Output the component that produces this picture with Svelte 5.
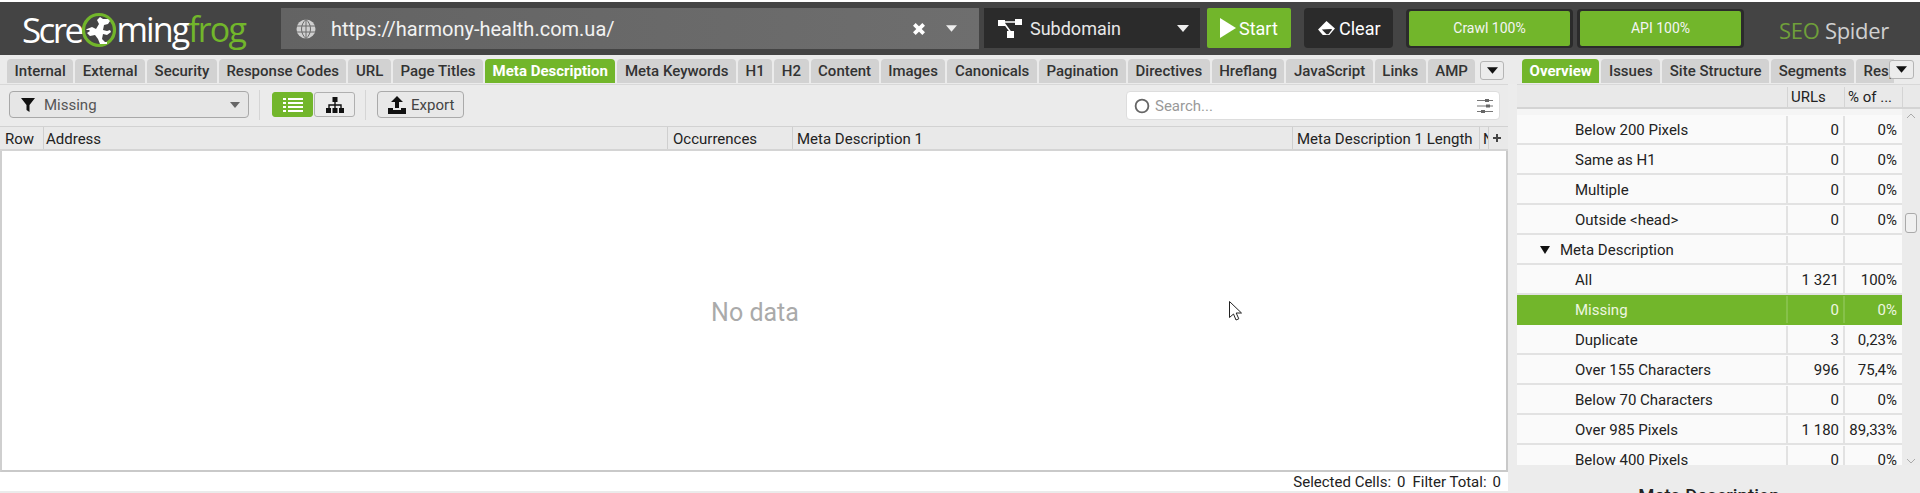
<script>
  const tabs = ['Internal','External','Security','Response Codes','URL','Page Titles','Meta Description','Meta Keywords','H1','H2','Content','Images','Canonicals','Pagination','Directives','Hreflang','JavaScript','Links','AMP'];
  const sideTabs = ['Overview','Issues','Site Structure','Segments','Response Times'];
  const rows = [
    {label:'Below 200 Pixels',urls:'0',pct:'0%'},
    {label:'Same as H1',urls:'0',pct:'0%'},
    {label:'Multiple',urls:'0',pct:'0%'},
    {label:'Outside <head>',urls:'0',pct:'0%'},
    {label:'Meta Description',urls:'',pct:'',group:true},
    {label:'All',urls:'1 321',pct:'100%'},
    {label:'Missing',urls:'0',pct:'0%',active:true},
    {label:'Duplicate',urls:'3',pct:'0,23%'},
    {label:'Over 155 Characters',urls:'996',pct:'75,4%'},
    {label:'Below 70 Characters',urls:'0',pct:'0%'},
    {label:'Over 985 Pixels',urls:'1 180',pct:'89,33%'},
    {label:'Below 400 Pixels',urls:'0',pct:'0%'}
  ];
</script>

<div class="app">
  <header class="header">
    <div class="logo">
      <span>Scre</span>
      <svg class="frog" viewBox="0 0 36 36" width="36" height="36">
        <circle cx="18" cy="18" r="15.5" fill="none" stroke="#72b62b" stroke-width="3.2"/>
        <path d="M6 17l5-2 4 2 3-5-2-4 3-3 3 2 5 0 2 2-2 3-4 1-1 5 4 1 3-1 1 2-4 3-4-1-1 5 3 3 2 0 0 2-7 0-2-5-3-4-5 1-3-3 3-2-1-1-3 0z" fill="#fff"/>
      </svg>
      <span class="logo-end">ming<span class="logo-green">frog</span></span>
    </div>

    <div class="url">
      <svg class="globe" viewBox="0 0 20 20" width="20" height="20">
        <circle cx="10" cy="10" r="9.5" fill="#cfcfcf"/>
        <path d="M0.5 7h19M0.5 13h19M10 0.5v19M10 0.5c-6 5-6 14 0 19M10 0.5c6 5 6 14 0 19" stroke="#6a6a6a" stroke-width="1" fill="none"/>
      </svg>
      <span class="url-text">https://harmony-health.com.ua/</span>
      <svg class="url-x" viewBox="0 0 12 12" width="14" height="14"><path d="M2 2l8 8M10 2l-8 8" stroke="#fff" stroke-width="3.2"/></svg>
      <svg class="url-caret" viewBox="0 0 10 6" width="11" height="7"><path d="M0 0h10L5 6z" fill="#eee"/></svg>
    </div>

    <div class="mode">
      <svg viewBox="0 0 24 20" width="24" height="20">
        <path d="M3 4h17M6 5l8 11" stroke="#fff" stroke-width="1.6" fill="none"/>
        <rect x="0" y="2" width="7" height="6" fill="#fff"/><rect x="17" y="1" width="7" height="6" fill="#fff"/><rect x="9" y="13" width="7" height="7" fill="#fff"/>
      </svg>
      <span class="mode-text">Subdomain</span>
      <svg class="mode-caret" viewBox="0 0 12 7" width="12" height="7"><path d="M0 0h12L6 7z" fill="#eee"/></svg>
    </div>

    <button class="start">
      <svg viewBox="0 0 16 20" width="16" height="20"><path d="M0 0l16 10L0 20z" fill="#fff"/></svg>
      <span>Start</span>
    </button>

    <button class="clear">
      <svg viewBox="0 0 20 16" width="19" height="15"><path d="M10 0l9 8-6 7H6L1 9z" fill="#fff"/><path d="M5 9l5 5h2l4-5-1-0.5z" fill="#2b2b2b"/></svg>
      <span>Clear</span>
    </button>

    <div class="progress crawl"><div class="bar">Crawl 100%</div></div>
    <div class="progress api"><div class="bar">API 100%</div></div>

    <div class="brand"><span class="seo">SEO</span> Spider</div>
  </header>

  <div class="main">
    <section class="left">
      <div class="tabbar">
        {#each tabs as t}
          <div class="tab" class:on={t === 'Meta Description'}>{t}</div>
        {/each}
        <button class="more"><svg viewBox="0 0 10 6" width="11" height="7"><path d="M0 0h10L5 6z" fill="#111"/></svg></button>
      </div>

      <div class="toolbar">
        <div class="filter">
          <svg viewBox="0 0 14 14" width="14" height="14"><path d="M0 0h14L8.5 7v7l-3-2V7z" fill="#111"/></svg>
          <span>Missing</span>
          <svg class="filter-caret" viewBox="0 0 10 6" width="10" height="6"><path d="M0 0h10L5 6z" fill="#666"/></svg>
        </div>
        <div class="sep"></div>
        <div class="views">
          <button class="view on">
            <svg viewBox="0 0 20 14" width="20" height="14"><path d="M0 1h3M5 1h15M0 5h3M5 5h15M0 9h3M5 9h15M0 13h3M5 13h15" stroke="#fff" stroke-width="2"/></svg>
          </button>
          <button class="view">
            <svg viewBox="0 0 18 16" width="18" height="16"><path d="M9 4v4M3 11V8h12v3M9 8v3" stroke="#111" stroke-width="1.4" fill="none"/><rect x="6.5" y="0" width="5" height="5" fill="#111"/><rect x="0" y="11" width="5" height="5" fill="#111"/><rect x="6.5" y="11" width="5" height="5" fill="#111"/><rect x="13" y="11" width="5" height="5" fill="#111"/></svg>
          </button>
        </div>
        <div class="sep sep2"></div>
        <button class="export">
          <svg viewBox="0 0 18 18" width="18" height="18"><path d="M9 0l6 6h-4v6H7V6H3z" fill="#111"/><path d="M0 12h5v2h8v-2h5v6H0z" fill="#111"/></svg>
          <span>Export</span>
        </button>
        <div class="search">
          <svg viewBox="0 0 14 14" width="16" height="16"><circle cx="7" cy="7" r="5.6" fill="none" stroke="#666" stroke-width="1.6"/></svg>
          <span>Search...</span>
          <svg class="sliders" viewBox="0 0 16 16" width="16" height="16"><path d="M0 2.5h16M0 8h16M0 13.5h16" stroke="#777" stroke-width="1"/><rect x="8" y="1" width="4" height="3" fill="#666"/><rect x="9" y="6.5" width="4" height="3" fill="#666"/><rect x="4" y="12" width="4" height="3" fill="#666"/></svg>
        </div>
      </div>

      <div class="thead">
        <div class="th c-row">Row</div>
        <div class="th c-addr">Address</div>
        <div class="th c-occ">Occurrences</div>
        <div class="th c-md">Meta Description 1</div>
        <div class="th c-len">Meta Description 1 Length</div>
        <div class="th c-n">N</div>
        <div class="th c-plus">
          <svg viewBox="0 0 8 8" width="8" height="8"><path d="M4 0v8M0 4h8" stroke="#444" stroke-width="2"/></svg>
        </div>
      </div>

      <div class="tbody">
        <span class="nodata">No data</span>
        <svg class="cursor" viewBox="0 0 13 20" width="13" height="20"><path d="M0.5 0.5v16l4-3.5 2.5 6 2.8-1.2-2.6-5.8h5.3z" fill="#fff" stroke="#222" stroke-width="1"/></svg>
      </div>

      <div class="status">
        <span>Selected Cells:</span><span class="val">0</span>
        <span>Filter Total:</span><span class="val">0</span>
      </div>
    </section>

    <aside class="right">
      <div class="tabbar side">
        <div class="tabclip">
          {#each sideTabs as t}
            <div class="tab" class:on={t === 'Overview'}>{t}</div>
          {/each}
        </div>
        <button class="more"><svg viewBox="0 0 10 6" width="11" height="7"><path d="M0 0h10L5 6z" fill="#111"/></svg></button>
      </div>

      <div class="shead">
        <div class="sh-name"></div>
        <div class="sh-urls">URLs</div>
        <div class="sh-pct">% of ...</div>
        <div class="sh-end"></div>
      </div>

      <div class="sbody">
        <div class="rows">
          {#each rows as r}
            <div class="row" class:active={r.active}>
              <div class="name" class:group={r.group}>
                {#if r.group}<svg viewBox="0 0 10 8" width="10" height="8"><path d="M0 0h10L5 8z" fill="#111"/></svg>{/if}
                <span>{r.label}</span>
              </div>
              <div class="urls">{r.urls}</div>
              <div class="pct">{r.pct}</div>
            </div>
          {/each}
        </div>
        <div class="scroll">
          <svg class="chev up" viewBox="0 0 10 6" width="10" height="6"><path d="M1 5l4-4 4 4" fill="none" stroke="#aaa" stroke-width="1"/></svg>
          <div class="thumb"></div>
          <svg class="chev down" viewBox="0 0 10 6" width="10" height="6"><path d="M1 1l4 4 4-4" fill="none" stroke="#aaa" stroke-width="1"/></svg>
        </div>
      </div>

      <div class="detail">Meta Description</div>
    </aside>
  </div>
</div>

<style>
  :global(body) { margin: 0; background: #ececec; }
  * { box-sizing: border-box; }
  button { border: 0; padding: 0; margin: 0; font: inherit; }
  svg { display: block; flex: none; }
  .app {
    width: 1920px; height: 493px; overflow: hidden; background: #ececec;
    font-family: Roboto, sans-serif; color: #222; display: flex; flex-direction: column;
    padding-top: 2px; position: relative;
  }
  .app::before { content: ""; position: absolute; inset: 0 0 auto 0; height: 2px; background: #fff; }

  .header { height: 53px; flex: none; background: #444; display: flex; align-items: flex-start; padding-top: 6px; }
  .logo {
    width: 281px; flex: none; margin-top: 1px; height: 40px; padding-left: 22px; display: flex; align-items: center;
    font-family: "Open Sans", sans-serif; font-size: 35px; letter-spacing: -2.6px; color: #fff; font-weight: 400;
  }
  .frog { margin: 2px 0 0 -1px; }
  .logo-end { font-size: 34px; letter-spacing: -1.9px; font-weight: 400; margin-left: 0; }
  .logo-green { color: #72b62b; }

  .url {
    width: 698px; height: 41px; background: linear-gradient(90deg, #636363, #6e6e6e);
    display: flex; align-items: center; padding-left: 15px; margin-right: 5px; flex: none;
  }
  .url-text { margin-left: 15px; font-size: 20px; color: #f2f2f2; flex: 1; }
  .url-x { margin-right: 20px; }
  .url-caret { margin-right: 22px; }

  .mode {
    width: 216px; height: 40px; background: #2b2b2b; margin-right: 7px; display: flex; align-items: center; padding-left: 14px; flex: none;
  }
  .mode-text { margin-left: 8px; font-size: 18px; color: #e8e8e8; flex: 1; }
  .mode-caret { margin-right: 11px; }

  .start {
    width: 84px; height: 40px; background: #72b62b; border-radius: 2px; color: #fff; font-size: 18px; margin-right: 13px;
    display: flex; align-items: center; padding-left: 13px; gap: 3px; flex: none;
  }
  .clear {
    width: 89px; height: 40px; background: #2b2b2b; border-radius: 4px; color: #fff; font-size: 18px; margin-right: 13px;
    display: flex; align-items: center; padding-left: 13px; gap: 3px; flex: none;
  }
  .progress { width: 167px; height: 39px; margin-top: 1px; padding: 2px 3px; background: #2b2b2b; border-radius: 4px; flex: none; }
  .api { margin-left: 4px; }
  .bar {
    height: 35px; background: #72b62b; border-radius: 2px; color: #f4f4f4; font-size: 14px;
    display: flex; align-items: center; justify-content: center; padding-bottom: 2px;
  }
  .brand { margin-left: 35px; font-family: "Open Sans", sans-serif; font-size: 22px; color: #d0d0d0; margin-top: 7px; letter-spacing: -0.3px; white-space: nowrap; }
  .seo { color: #6f9f3a; }

  .main { flex: 1; display: flex; min-height: 0; }
  .left { width: 1508px; flex: none; display: flex; flex-direction: column; background: #ebebeb; }
  .right { flex: 1; min-width: 0; display: flex; flex-direction: column; }

  .tabbar { height: 29px; flex: none; padding: 4px 0 0 7px; display: flex; gap: 2px; position: relative; overflow: hidden; }
  .tabclip { width: 372px; display: flex; gap: 2px; overflow: hidden; flex: none; }
  .tab {
    height: 24px; background: #d2d2d2; border-radius: 4px 4px 0 0; padding: 0 7.55px; flex: none;
    font-size: 15px; font-weight: 500; color: #333; display: flex; align-items: center;
  }
  .tab.on { background: #72b62b; color: #fff; font-weight: 700; }
  .more {
    position: absolute; left: 1480px; top: 6px; width: 24px; height: 19px; background: #ececec;
    border: 1px solid #b5b5b5; border-radius: 3px; display: flex; align-items: center; justify-content: center;
  }
  .side { padding-left: 14px; }
  .side .more { left: 381px; width: 25px; top: 5px; }

  .toolbar { height: 42px; flex: none; border-top: 1px solid #d8d8d8; display: flex; align-items: flex-start; padding: 6px 0 0 9px; }
  .filter {
    width: 240px; height: 27px; background: #e6e6e6; border: 1px solid #a8a8a8; border-radius: 4px;
    display: flex; align-items: center; padding-left: 11px; font-size: 15px; color: #555; gap: 9px;
  }
  .filter span { flex: 1; }
  .filter-caret { margin-right: 8px; }
  .sep { width: 1px; height: 30px; background: #d5d5d5; margin: -1px 12px 0 10px; }
  .sep2 { margin: -1px 11px 0 10px; }
  .views { display: flex; gap: 1px; padding-top: 1px; }
  .view {
    width: 41px; height: 25px; background: #ececec; border: 1px solid #b0b0b0; border-radius: 3px;
    display: flex; align-items: center; justify-content: center;
  }
  .view.on { background: #72b62b; border-color: #72b62b; }
  .export {
    width: 87px; height: 27px; background: #e8e8e8; border: 1px solid #aaa; border-radius: 4px; color: #444; font-size: 15px;
    display: flex; align-items: center; padding-left: 10px; gap: 5px;
  }
  .search {
    margin-left: 662px; width: 374px; height: 29px; background: #fff; border: 1px solid #ddd; border-radius: 4px;
    display: flex; align-items: center; padding-left: 7px; font-size: 15px; color: #999; gap: 5px;
  }
  .search span { flex: 1; }
  .sliders { margin-right: 6px; }

  .thead { height: 25px; flex: none; background: #e9e9e9; display: flex; border-top: 1px solid #d2d2d2; border-bottom: 2px solid #d4d4d4; font-size: 15px; color: #222; }
  .th { height: 100%; border-right: 1px solid #cfcfcf; display: flex; align-items: center; padding: 2px 0 0 5px; white-space: nowrap; overflow: hidden; flex: none; }
  .c-row { width: 44px; padding-left: 5px; }
  .c-addr { width: 624px; padding-left: 2px; }
  .c-occ { width: 125px; }
  .c-md { width: 500px; padding-left: 4px; }
  .c-len { width: 187px; padding-left: 4px; }
  .c-n { width: 9px; padding-left: 3px; }
  .c-plus { width: 18px; border-right: 0; padding: 0 0 0 4px; }

  .tbody {
    flex: 1; min-height: 0; background: #fff; border-left: 2px solid #cfcfcf; border-right: 2px solid #c9c9c9; border-bottom: 2px solid #c9c9c9;
    display: flex; align-items: center; justify-content: center; position: relative;
  }
  .nodata { font-size: 25px; color: #aaa; margin: 3px 0 0 2px; }
  .cursor { position: absolute; left: 1227px; top: 150px; }

  .status {
    height: 19px; flex: none; background: #fff; display: flex; justify-content: flex-end; align-items: center; font-size: 15px;
    padding: 1px 6px 0 0; gap: 6px; margin-bottom: 2px;
  }
  .val { margin-right: 1px; }

  .right .tabbar { background: #ebebeb; }
  .shead { height: 25px; flex: none; display: flex; background: #e9e9e9; border-top: 1px solid #d8d8d8; border-bottom: 2px solid #d4d4d4; font-size: 15px; margin-left: 9px; padding-top: 2px; }
  .sh-name { width: 270px; }
  .sh-urls { width: 57px; border-left: 1px solid #d4d4d4; padding-left: 3px; display: flex; align-items: center; }
  .sh-pct { width: 58px; border-left: 1px solid #d4d4d4; padding-left: 3px; display: flex; align-items: center; white-space: nowrap; }
  .sh-end { flex: 1; border-left: 1px solid #d4d4d4; }

  .sbody { height: 356px; flex: none; display: flex; margin-left: 9px; background: #ededed; position: relative; }
  .rows { width: 385px; flex: none; padding-top: 6px; height: 356px; overflow: hidden; background: #f5f5f5; }
  .row { height: 30px; display: flex; background: #fafafa; border-bottom: 2px solid #e2e2e2; font-size: 15px; color: #222; padding-top: 1px; }
  .row.active { background: #72b62b; color: #eef7e0; border-bottom-color: #72b62b; }
  .name { width: 269px; padding-left: 58px; display: flex; align-items: center; gap: 10px; white-space: nowrap; }
  .name.group { padding-left: 23px; }
  .urls { width: 57px; border-left: 2px solid #e2e2e2; display: flex; align-items: center; justify-content: flex-end; padding-right: 4px; }
  .pct { flex: 1; border-left: 2px solid #e2e2e2; display: flex; align-items: center; justify-content: flex-end; padding-right: 5px; }
  .row.active .urls, .row.active .pct { border-left-color: #86c14a; }
  .scroll { flex: 1; position: relative; background: #ebebeb; }
  .chev { position: absolute; left: 4px; }
  .up { top: 4px; }
  .down { top: 349px; }
  .thumb { position: absolute; left: 3px; top: 104px; width: 12px; height: 20px; background: #f0f0f0; border: 1px solid #aaa; border-radius: 3px; }

  .detail { margin-top: 20px; text-align: center; font-size: 18.5px; font-weight: 500; color: #222; padding-right: 10px; white-space: nowrap; }
</style>
